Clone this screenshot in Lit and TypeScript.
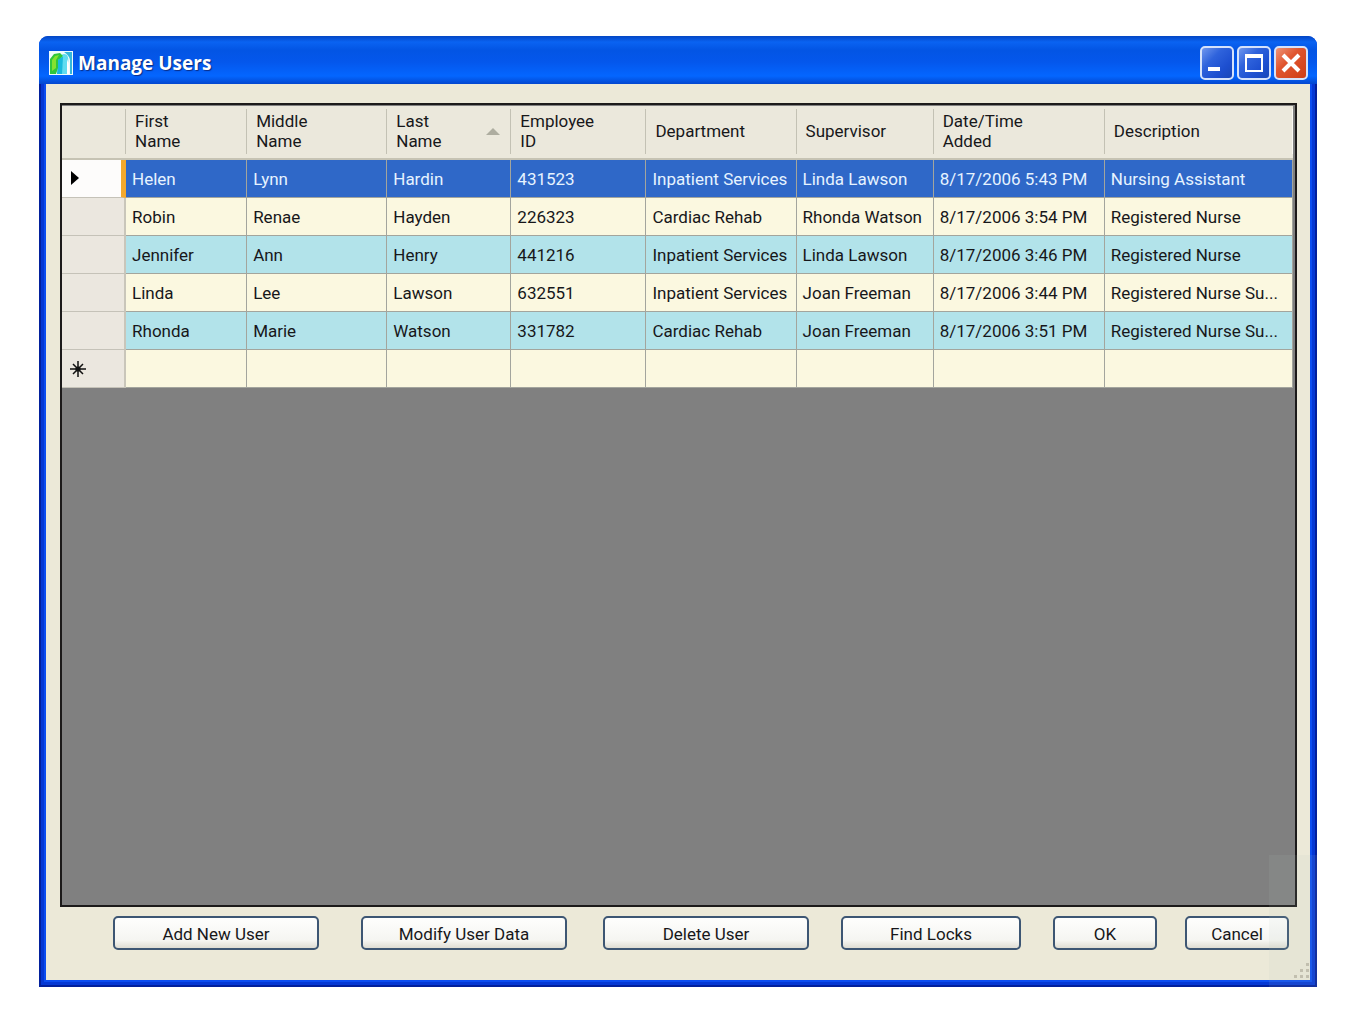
import { LitElement, html, css, svg } from "lit";
import { customElement, property, state } from "lit/decorators.js";
import { classMap } from "lit/directives/class-map.js";

interface Column {
  lines: string[];
  width: number;
  sorted?: boolean;
}

const COLUMNS: Column[] = [
  { lines: ["First", "Name"], width: 121 },
  { lines: ["Middle", "Name"], width: 140 },
  { lines: ["Last", "Name"], width: 124, sorted: true },
  { lines: ["Employee", "ID"], width: 135 },
  { lines: ["Department"], width: 150 },
  { lines: ["Supervisor"], width: 137 },
  { lines: ["Date/Time", "Added"], width: 171 },
  { lines: ["Description"], width: 188 },
];

const USERS: string[][] = [
  ["Helen", "Lynn", "Hardin", "431523", "Inpatient Services", "Linda Lawson", "8/17/2006 5:43 PM", "Nursing Assistant"],
  ["Robin", "Renae", "Hayden", "226323", "Cardiac Rehab", "Rhonda Watson", "8/17/2006 3:54 PM", "Registered Nurse"],
  ["Jennifer", "Ann", "Henry", "441216", "Inpatient Services", "Linda Lawson", "8/17/2006 3:46 PM", "Registered Nurse"],
  ["Linda", "Lee", "Lawson", "632551", "Inpatient Services", "Joan Freeman", "8/17/2006 3:44 PM", "Registered Nurse Su..."],
  ["Rhonda", "Marie", "Watson", "331782", "Cardiac Rehab", "Joan Freeman", "8/17/2006 3:51 PM", "Registered Nurse Su..."],
];

@customElement("title-bar")
export class TitleBar extends LitElement {
  @property() heading = "";

  static styles = css`
    :host {
      display: flex;
      align-items: center;
      gap: 5px;
      height: 48px;
      padding: 5px 9px 0 10px;
      box-sizing: border-box;
      border-radius: 9px 9px 0 0;
      background: linear-gradient(#0346c4 0, #0a63f2 6px, #0355e4 14px, #0457ec 26px, #0466ff 40px, #0347cf 48px);
    }
    .logo {
      width: 24px;
      height: 24px;
    }
    h1 {
      flex: 1;
      margin: 0;
      color: #fff;
      font: 700 19px/26px "Open Sans", "Noto Sans", sans-serif;
      text-shadow: 1px 1px 1px #0a2c84;
    }
    .tools {
      display: flex;
      gap: 3px;
    }
    button {
      width: 34px;
      height: 34px;
      padding: 0;
      border: 2px solid #d5e2fb;
      border-radius: 5px;
      background: linear-gradient(135deg, #6f97ee 0, #2f63dc 35%, #1d4fd0 70%, #1846b8 100%);
    }
    .close {
      background: linear-gradient(135deg, #ee9478 0, #e0552f 40%, #cf3d16 100%);
    }
    button svg {
      display: block;
      width: 30px;
      height: 30px;
    }
  `;

  render() {
    return html`
      <svg class="logo" viewBox="0 0 24 24" aria-hidden="true">
        <rect width="24" height="24" fill="#effcfb" />
        <path d="M10 6q4-5 8-2 2 3 1 8v11h-9Z" fill="#5fdcf0" />
        <path d="M9 9q1-3 5-3l-1 17H8Z" fill="#17b9dd" />
        <path d="M1 23V8L5 3l6-1 3 3-5 4v8l-2 6Z" fill="#2fc63c" />
        <path d="M3 20V9l3-4 4-1-3 5v8Z" fill="#84e22e" />
        <path d="M15 1h8v22h-2V9q-1-5-6-8Z" fill="#35b8dc" />
        <path d="M18 8q2 4 2 15h-2Z" fill="#fff" />
      </svg>
      <h1>${this.heading}</h1>
      <div class="tools">
        <button aria-label="Minimize">
          <svg viewBox="0 0 30 30">${svg`<rect x="6" y="19" width="12" height="4" fill="#fff"/>`}</svg>
        </button>
        <button aria-label="Maximize">
          <svg viewBox="0 0 30 30">${svg`<path d="M6 6h18v18H6ZM8 10v12h14V10Z" fill="#fff" fill-rule="evenodd"/>`}</svg>
        </button>
        <button class="close" aria-label="Close">
          <svg viewBox="0 0 30 30">${svg`<path d="M7 7l16 16M23 7L7 23" stroke="#fff" stroke-width="4"/>`}</svg>
        </button>
      </div>
    `;
  }
}

@customElement("user-grid")
export class UserGrid extends LitElement {
  @state() private selected = 0;

  static styles = css`
    :host {
      display: block;
      padding: 1px 2px 0 0;
      border: 2px solid #1c1a1a;
      background: #808080;
      overflow: hidden;
    }
    table {
      width: 100%;
      border-collapse: separate;
      border-spacing: 0;
      table-layout: fixed;
      color: #17171a;
      font: 17px/20px Roboto, "Liberation Sans", sans-serif;
    }
    .rowhead {
      width: 64px;
    }
    th,
    td {
      box-sizing: border-box;
      padding: 0 3px 0 6px;
      text-align: left;
      font-weight: 400;
      white-space: nowrap;
      overflow: hidden;
      text-overflow: ellipsis;
    }
    thead th {
      height: 54px;
      padding: 0 0 2px 0;
      background: #ebe8dc;
      border-bottom: 2px solid #c6c3b4;
    }
    .head {
      display: flex;
      align-items: center;
      justify-content: space-between;
      height: 45px;
      padding: 0 10px 0 9px;
      border-right: 1px solid #c3c1b4;
      box-shadow: 1px 0 #fbfaf4;
    }
    th:last-child .head {
      border-right-color: #fbfaf4;
    }
    .arrow {
      width: 14px;
      height: 7px;
    }
    tbody td {
      height: 38px;
      background: #fbf8e0;
      border-right: 1px solid #a3a59d;
      border-bottom: 1px solid #a3a59d;
    }
    tbody tr:nth-child(odd) td {
      background: #b2e3ea;
    }
    tbody tr.blank td {
      background: #fbf8e0;
    }
    tbody tr.selected td {
      background: #2f68c8;
      color: #e6f3ff;
    }
    tbody th {
      height: 38px;
      padding: 0 8px;
      background: #ebe7df;
      border-right: 2px solid #c9c6ba;
      border-bottom: 1px solid #c5c2b8;
    }
    tbody .selected th {
      background: #fdfcfb;
      border-right: 5px solid #f3a92e;
    }
    .mark {
      display: block;
      width: 16px;
      height: 16px;
    }
  `;

  render() {
    return html`
      <table aria-label="Users">
        <colgroup>
          <col class="rowhead" />
          ${COLUMNS.map((c) => html`<col style="width:${c.width}px" />`)}
        </colgroup>
        <thead>
          <tr>
            <th><div class="head"></div></th>
            ${COLUMNS.map(
              (c) => html`<th scope="col" aria-sort=${c.sorted ? "ascending" : "none"}>
                <div class="head">
                  <span>${c.lines.map((l, i) => (i ? html`<br />${l}` : l))}</span>
                  ${c.sorted
                    ? html`<svg class="arrow" viewBox="0 0 16 8" aria-hidden="true"><path d="M8 0l8 8H0Z" fill="#aeada0" /></svg>`
                    : null}
                </div>
              </th>`
            )}
          </tr>
        </thead>
        <tbody>
          ${USERS.map(
            (row, i) => html`<tr
              class=${classMap({ selected: i === this.selected })}
              @click=${() => (this.selected = i)}
            >
              <th scope="row">
                ${i === this.selected
                  ? html`<svg class="mark" viewBox="0 0 16 16" aria-label="Current row"><path d="M1 0l8 7-8 7Z" fill="#000" /></svg>`
                  : null}
              </th>
              ${row.map((v) => html`<td>${v}</td>`)}
            </tr>`
          )}
          <tr class="blank">
            <th scope="row">
              <svg class="mark" viewBox="0 0 16 16" aria-label="New row">
                <path d="M8 0v16M0 8h16M3 3l10 10M13 3L3 13" stroke="#111" stroke-width="1.5" />
                <circle cx="8" cy="8" r="2.6" fill="#111" />
              </svg>
            </th>
            ${COLUMNS.map(() => html`<td></td>`)}
          </tr>
        </tbody>
      </table>
    `;
  }
}

@customElement("app-root")
export class AppRoot extends LitElement {
  static styles = css`
    :host {
      display: flex;
      box-sizing: border-box;
      min-height: 100vh;
      padding: 36px 33px 30px 39px;
      background: #fff;
    }
    .window {
      position: relative;
      display: flex;
      flex: 1;
      flex-direction: column;
      min-width: 0;
      border-radius: 9px 9px 0 0;
      background: #0a3fdc;
    }
    .body {
      display: flex;
      flex: 1;
      flex-direction: column;
      gap: 9px;
      margin: 0 7px 7px;
      padding: 19px 13px 30px 14px;
      background: #ece9d8;
      box-shadow: 0 0 0 2px #0b4df0, 0 0 0 5px #0538d4, 0 0 0 7px #02209c;
      clip-path: inset(0 -7px -7px -7px);
    }
    user-grid {
      flex: 1;
    }
    .actions {
      display: grid;
      grid-template-columns: 248fr 242fr 238fr 212fr 132fr 105fr;
      padding: 0 7px 0 53px;
    }
    .actions button {
      height: 34px;
      padding: 2px 0 0;
      border: 2px solid #3d5673;
      border-radius: 5px;
      background: linear-gradient(#fefefd, #f5f5f1 75%, #dfddd3);
      color: #17171a;
      font: 17px/20px Roboto, "Liberation Sans", sans-serif;
    }
    .wide {
      width: 206px;
    }
    .medium {
      width: 180px;
    }
    .small {
      width: 104px;
    }
    .grip {
      position: absolute;
      right: 7px;
      bottom: 8px;
      width: 16px;
      height: 16px;
    }
    .shade {
      position: absolute;
      right: 0;
      bottom: 0;
      width: 48px;
      height: 132px;
      background: rgba(180, 195, 185, 0.1);
      pointer-events: none;
    }
  `;

  render() {
    return html`
      <main class="window">
        <title-bar heading="Manage Users"></title-bar>
        <div class="body">
          <user-grid></user-grid>
          <div class="actions">
            <button class="wide">Add New User</button>
            <button class="wide">Modify User Data</button>
            <button class="wide">Delete User</button>
            <button class="medium">Find Locks</button>
            <button class="small">OK</button>
            <button class="small">Cancel</button>
          </div>
        </div>
        <svg class="grip" viewBox="0 0 16 16" aria-hidden="true">
          <path d="M12 0h3v3h-3ZM6 6h3v3H6ZM12 6h3v3h-3ZM0 12h3v3H0ZM6 12h3v3H6ZM12 12h3v3h-3Z" fill="#c4bfae" />
        </svg>
        <div class="shade"></div>
      </main>
    `;
  }
}
